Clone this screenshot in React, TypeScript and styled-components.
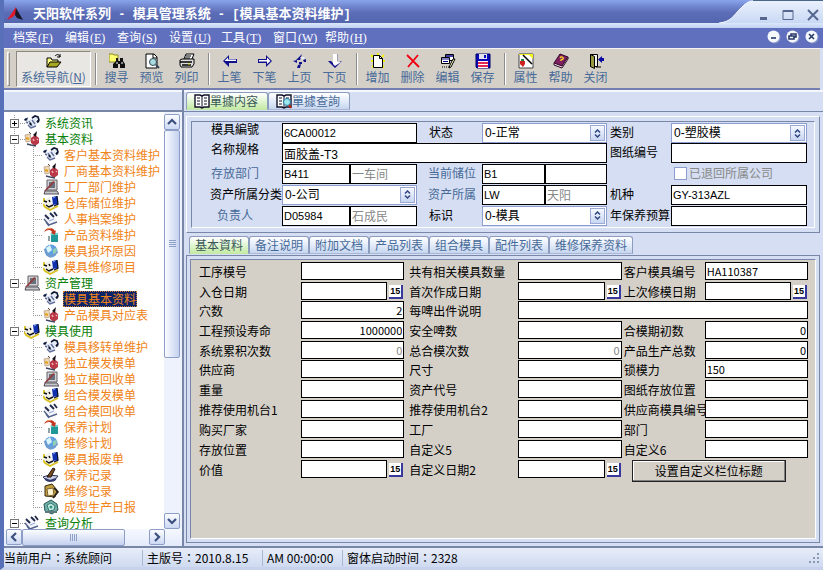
import React from 'react';
import styled, { createGlobalStyle, css } from 'styled-components';

const cjk = '"Noto Sans CJK SC", sans-serif';
const ink = '#000';
const steel = '#476a98';
const sky = '#d5def2';
const line = '#7886a8';
const stone = '#d4d0c8';

const Global = createGlobalStyle`
  * { box-sizing: border-box; }
  body { margin: 0; overflow: hidden; }
  button, input, select { font: inherit; margin: 0; padding: 0; border-radius: 0; }
`;

const Window = styled.div`
  height: 100vh;
  display: flex;
  flex-direction: column;
  font: 12px/16px ${cjk};
  color: ${ink};
  background: ${sky};
  border-left: 4px solid #5870b8;
  border-bottom: 3px solid #c6d2ec;
  overflow: hidden;
`;

/* ---------- title and menu ---------- */
const TitleBar = styled.header`
  height: 23px;
  flex: none;
  display: flex;
  margin-left: -4px;
  background: linear-gradient(#89a5ec, #7389d0 25%, #5c6db8 55%, #5366ae);
`;
const TitleText = styled.h1`
  flex: 1;
  display: flex;
  align-items: center;
  gap: 9px;
  margin: 0;
  padding: 5px 0 0 7px;
  font-size: 13px;
  line-height: 16px;
  font-weight: 700;
  color: #fff;
  white-space: pre;
`;
const TitleDash = styled.span`
  font-family: "Liberation Mono", monospace;
  font-size: 12px;
`;
const TitleButtons = styled.div`
  display: flex;
  align-items: center;
  gap: 5px;
  padding: 6px 0 0 0;
  background: linear-gradient(#eaf1fd, #c9d8f4);
  border-top: 1px solid #49688c;
`;
const TitleButton = styled.button`
  width: 20px;
  height: 16px;
  border: 0;
  background: none;
  display: grid;
  place-items: center;
`;
const Strip = styled.div`
  height: 5px;
  flex: none;
  background: linear-gradient(#dce8fb, #bfd0f2);
`;
const MenuBar = styled.nav`
  height: 20px;
  flex: none;
  display: flex;
  align-items: center;
  padding: 0 4px 2px 9px;
  background: #6070bf;
`;
const MenuItem = styled.button`
  width: 52px;
  border: 0;
  background: none;
  color: #fff;
  text-align: left;
  white-space: nowrap;
`;
const Key = styled.span`
  font-family: "Liberation Serif", serif;
  margin-left: 1px;
`;
const MdiButtons = styled.div`
  display: flex;
  gap: 5px;
  margin-left: auto;
`;
const MdiButton = styled.button`
  width: 14px;
  height: 14px;
  border: 0;
  background: none;
`;

/* ---------- toolbar ---------- */
const ToolBar = styled.div`
  height: 42px;
  flex: none;
  display: flex;
  align-items: center;
  padding-left: 3px;
  background: ${stone};
  border-top: 1px solid #f4f4f8;
  border-bottom: 2px solid #7580b0;
  margin-right: 3px;
`;
const Grip = styled.div`
  width: 3px;
  height: 34px;
  margin-right: 6px;
  border: 1px solid;
  border-color: #fff #8c8c8c #8c8c8c #fff;
`;
const NavButton = styled.button`
  width: 75px;
  height: 36px;
  border: 1px solid;
  border-color: #8b8880 #fff #fff #8b8880;
  background: #e9e7e3;
  color: ${steel};
  display: flex;
  flex-direction: column;
  align-items: center;
  justify-content: center;
  line-height: 16px;
  white-space: nowrap;
`;
const ToolButton = styled.button`
  width: 35px;
  height: 36px;
  border: 0;
  background: none;
  color: ${steel};
  display: flex;
  flex-direction: column;
  align-items: center;
  justify-content: center;
  line-height: 16px;
`;
const ToolSep = styled.div`
  width: 2px;
  height: 32px;
  margin: 0 2px 0 4px;
  border-left: 1px solid #8c8c8c;
  border-right: 1px solid #fff;
`;
const Icon = styled.svg`
  width: 16px;
  height: 16px;
  flex: none;
  display: block;
`;

/* ---------- body ---------- */
const Body = styled.div`
  flex: 1;
  min-height: 0;
  display: flex;
`;
const Side = styled.aside`
  width: 180px;
  flex: none;
  display: flex;
  flex-direction: column;
  border-right: 2px solid ${line};
`;
const SideHead = styled.div`
  height: 22px;
  flex: none;
  border-top: 2px solid #f5f8ff;
  border-bottom: 2px solid ${line};
`;
const TreeArea = styled.div`
  flex: 1;
  min-height: 0;
  display: flex;
  background: #fff;
`;
const Tree = styled.ul`
  flex: 1;
  min-width: 0;
  margin: 0;
  padding: 3px 0 0 5px;
  list-style: none;
  overflow: hidden;
`;
const dotsV = 'repeating-linear-gradient(#999 0 1px, transparent 1px 2px)';
const dotsH = 'repeating-linear-gradient(90deg, #999 0 1px, transparent 1px 2px)';
const TreeRow = styled.li<{ $child?: boolean; $last?: boolean }>`
  height: 16px;
  display: flex;
  align-items: center;
  gap: 4px;
  white-space: nowrap;
  color: ${p => (p.$child ? '#f08418' : '#088008')};
  ${p =>
    p.$child
      ? css`
          padding-left: 34px;
          background: ${dotsV} 5px 0 / 1px 100% no-repeat,
            ${dotsV} 24px 0 / 1px ${p.$last ? '50%' : '100%'} no-repeat,
            ${dotsH} 24px 8px / 10px 1px no-repeat;
        `
      : css`
          padding-left: 1px;
          background: ${dotsV} 5px 0 / 1px 100% no-repeat,
            ${dotsH} 5px 8px / 12px 1px no-repeat;
        `}
`;
const Expander = styled.button`
  width: 9px;
  height: 9px;
  border: 1px solid #777;
  background: #fff;
  display: grid;
  place-items: center;
  margin-right: 1px;
`;
const TreeLabel = styled.span<{ $on?: boolean }>`
  line-height: 16px;
  padding: 0 1px;
  ${p => p.$on && css`background: #0a246a; outline: 1px dotted #d08030; outline-offset: -1px;`}
`;
const VScroll = styled.div`
  width: 18px;
  flex: none;
  display: flex;
  flex-direction: column;
  padding: 2px 2px 0 0;
  background: #eef2fc;
`;
const HScroll = styled.div`
  height: 17px;
  flex: none;
  display: flex;
  padding: 0 17px 0 2px;
  background: linear-gradient(#f5f8ff, #e3eafa);
`;
const ScrollButton = styled.button`
  width: 16px;
  height: 16px;
  flex: none;
  border: 1px solid #8d9ec6;
  border-radius: 2px;
  background: linear-gradient(#fbfcff, #ccd9f3);
  display: grid;
  place-items: center;
`;
const VThumb = styled.div`
  flex: 0 1 55%;
  border: 1px solid #8d9ec6;
  border-radius: 2px;
  background: linear-gradient(90deg, #fafcff, #c4d1ef);
  display: grid;
  place-items: center;
`;
const HThumb = styled.div`
  flex: 0 1 65%;
  border: 1px solid #8d9ec6;
  border-radius: 2px;
  background: linear-gradient(#fafcff, #c4d1ef);
  display: grid;
  place-items: center;
`;
const Spacer = styled.div`
  flex: 1;
`;

const Main = styled.main`
  flex: 1;
  min-width: 0;
  display: flex;
  flex-direction: column;
`;
const Tabs = styled.div<{ $inner?: boolean }>`
  display: flex;
  flex: none;
  align-items: flex-end;
  ${p =>
    p.$inner
      ? css`height: 22px; padding: 0 0 1px 5px;`
      : css`height: 22px; padding: 0 0 1px 2px; border-top: 2px solid #f5f8ff; border-bottom: 1px solid ${line};`}
`;
const Tab = styled.button<{ $on?: boolean; $doc?: boolean }>`
  height: 18px;
  padding: ${p => (p.$doc ? '0 9px 0 7px' : '0 5px')};
  border: 1px solid #8c9cbc;
  border-bottom-color: ${p => (p.$on ? '#c4e8a8' : '#aab8d8')};
  border-radius: 3px 3px 0 0;
  margin-right: -1px;
  flex: none;
  display: flex;
  align-items: center;
  line-height: 16px;
  color: ${p => (p.$on ? '#385858' : steel)};
  background: ${p =>
    p.$on ? 'linear-gradient(#fff, #e9f8dd 40%, #c5eaa5)' : 'linear-gradient(#fff, #e4ecfa 50%, #c6d6ee)'};
  & + & { margin-left: 1px; }
`;

const HeadPane = styled.section`
  flex: none;
  margin: 4px 3px 0 2px;
  padding: 4px;
  border: 1px solid;
  border-color: #fff ${line} ${line} #fff;
`;
const HeadGrid = styled.form`
  display: grid;
  grid-template-columns: 89px minmax(0, 135fr) 65px minmax(0, 125fr) 64px minmax(0, 136fr);
  grid-template-rows: 20px 20px 21px 21px 21px;
  align-items: center;
  padding: 1px 7px 1px 1px;
  border: 1px solid;
  border-color: ${line} #fff #fff ${line};
  font-family: "Liberation Sans", ${cjk};
`;
const Label = styled.label<{ $blue?: boolean; $pad?: number; $top?: boolean }>`
  color: ${p => (p.$blue ? steel : ink)};
  padding-left: ${p => p.$pad ?? 0}px;
  line-height: 14px;
  white-space: nowrap;
  align-self: ${p => (p.$top ? 'start' : 'center')};
`;
const Pair = styled.div`
  display: grid;
  grid-template-columns: 68fr 67fr;
`;
const Box = styled.input<{ $tall?: boolean; $dim?: boolean; $right?: boolean; $span?: number; $small?: boolean }>`
  width: 100%;
  min-width: 0;
  height: ${p => (p.$tall ? 20 : 18)}px;
  border: 1px solid #000;
  background: #fff;
  padding: 0 1px;
  font-size: ${p => (p.$small ? 11 : 12)}px;
  line-height: 14px;
  color: ${p => (p.$dim ? '#888' : ink)};
  text-align: ${p => (p.$right ? 'right' : 'left')};
  ${p => p.$span && css`grid-column: span ${p.$span};`}
`;
const PickWrap = styled.div`
  display: grid;
  align-items: center;
  height: 20px;
  border: 1px solid #8c9ed0;
  background: #fff;
  & > * { grid-area: 1 / 1; }
`;
const PickSelect = styled.select`
  appearance: none;
  width: 100%;
  height: 18px;
  border: 0;
  padding-left: 2px;
  background: transparent;
  color: ${ink};
`;
const PickArrow = styled.span`
  justify-self: end;
  width: 15px;
  height: 16px;
  margin-right: 1px;
  border: 1px solid #9aaad4;
  background: linear-gradient(#f6f9ff, #c8d6f2);
  display: grid;
  place-items: center;
  pointer-events: none;
`;
const Check = styled.label`
  display: flex;
  align-items: center;
  gap: 2px;
  padding-left: 3px;
  color: #888;
  white-space: nowrap;
`;
const Tick = styled.input`
  appearance: none;
  width: 13px;
  height: 13px;
  border: 1px solid #8c9ed0;
  background: #fff;
`;

const DetailPane = styled.section`
  flex: 1;
  min-height: 0;
  display: flex;
  margin: 0 3px 3px 2px;
  padding: 3px;
  border: 1px solid ${line};
`;
const DetailGrid = styled.form`
  flex: 1;
  display: grid;
  grid-template-columns: 102px minmax(0, 103fr) 114px minmax(0, 103fr) 83px minmax(0, 103fr);
  grid-template-rows: 20px 19px 20px 20px 19px repeat(6, 20px);
  align-items: start;
  align-content: start;
  padding: 2px 7px 0 8px;
  border: 1px solid;
  border-color: ${line} #fff #fff ${line};
  background: ${stone};
`;
const DateField = styled.div`
  display: flex;
  align-items: center;
  gap: 2px;
`;
const DayButton = styled.button`
  width: 14px;
  height: 14px;
  flex: none;
  margin: 2px 1px 0 0;
  border: solid #38389c;
  border-width: 0 2px 2px 0;
  background: #fff;
  font: 700 9px/11px "Liberation Sans", sans-serif;
  text-align: center;
`;
const CaptionButton = styled.button`
  grid-column: span 2;
  width: 154px;
  height: 22px;
  margin-left: 10px;
  border: 1px solid;
  border-color: #fff #000 #000 #fff;
  box-shadow: inset -1px -1px #808080, inset 1px 1px #fff;
  outline: 1px solid #222;
  outline-offset: -1px;
  background: ${stone};
  line-height: 16px;
`;

const StatusBar = styled.footer`
  height: 21px;
  flex: none;
  display: flex;
  align-items: center;
  border-top: 2px solid ${line};
  background: linear-gradient(#e7edf9, #cfdaf0);
`;
const StatusCell = styled.span<{ $w?: number }>`
  ${p => (p.$w ? css`width: ${p.$w}px; border-right: 1px solid #a9b6d4;` : css`flex: 1;`)}
  padding-left: 4px;
  line-height: 16px;
  white-space: nowrap;
  &:first-child { padding-left: 0; }
`;
const Colon = styled.span`
  font-family: "Noto Sans CJK TC", sans-serif;
`;
const GripDots = styled.svg`
  width: 12px;
  height: 12px;
  margin-right: 3px;
`;

/* ---------- toolbar and tree drawings ---------- */
const art: Record<string, React.ReactNode> = {
  nav: <><path d="M1 14V5h4l1 2h6v2" fill="#ffff80" stroke="#000" /><path d="M1 14l3-5h11l-4 5z" fill="#a8a820" stroke="#000" /><path d="M9 3c2-2 4-2 5 1m0-3v3h-3" fill="none" stroke="#000" /></>,
  find: <><path d="M0 1h4l1 1h4v7H0z" fill="#ffff70" stroke="#8a8a20" /><path d="M7 5h2v3h2V5h3v3l2 3v4h-5v-4H9v4H4v-4l3-3z" fill="#111" /><path d="M8 9v2m5-2v2" stroke="#fff" /></>,
  preview: <><path d="M2 1h8l3 3v11H2z" fill="#fff" stroke="#000" /><path d="M9 1v4h4" fill="none" stroke="#000" /><circle cx="9" cy="9" r="3.5" fill="#a8dce0" stroke="#345" /><path d="M12 12l3 3" stroke="#345" strokeWidth="2" /></>,
  print: <><path d="M5 6l2-5h8l-2 5" fill="#fff" stroke="#000" /><path d="M7 3h5M6 5h5" stroke="#000" /><path d="M1 7l2-1h12v5l-2 3H2l-1-2z" fill="#ddd" stroke="#000" /><path d="M1 9h12M3 12h9" stroke="#000" strokeWidth="1.5" /><path d="M9 11h2" stroke="#dd0" /></>,
  left: <><path d="M7 2L1 8l6 6v-4h8V6H7z" fill="#10108c" /><path d="M6 4.5L2.500 8H14V6.500H6z" fill="#fff" /></>,
  right: <><path d="M9 2l6 6-6 6v-4H1V6h8z" fill="#10108c" /><path d="M10 4.500L13.500 8 10 11V8.500H2V7h8z" fill="#fff" /></>,
  pageUp: <><path d="M10 1L4 7h4zM1 8l4-1v3z" fill="#10108c" /><path d="M8 4h5l-2 3z" fill="#eceaf0" /><path d="M11 7l3-1v3h-2zM7 9h3v2H7zM6 12l3-1-1 4H5z" fill="#10108c" /></>,
  pageDown: <><path d="M1 8l7 7 7-7-3 1-4 3-4-4z" fill="#10108c" /><path d="M6 1h4v8h4l-6 4-2-2z" fill="#fff" /><path d="M10.500 1v7" stroke="#9c9cb8" /></>,
  add: <><path d="M1 2l2 2M8 0v2M14 2l-2 2M1 8h2m10 0h2M2 14l2-1m10 1l-2-1" stroke="#f4f400" strokeWidth="2" /><path d="M3.500 2.500h6l3 3v9h-9z" fill="#fff" stroke="#000" /><path d="M9.500 2.500v3h3" fill="none" stroke="#000" /></>,
  del: <path d="M2 2l12 12M13 2L3 14" stroke="#f00010" strokeWidth="1.8" />,
  edit: <><path d="M5.500 1.500h8v6h-8z" fill="#fff" stroke="#000" /><path d="M6 3h7" stroke="#008" strokeWidth="1.5" /><path d="M1.500 4.500h8v6h-8z" fill="#fff" stroke="#000" /><path d="M2 6h7M3 8.500h5" stroke="#008" /><path d="M15 6l-4 8-2 1 1-3 3-6z" fill="#ffc" stroke="#000" /><path d="M2 14h7" stroke="#000" strokeDasharray="1 1" /></>,
  save: <><path d="M1 1h14v14H2l-1-1z" fill="#0808b8" stroke="#000068" /><path d="M4 1h8v5H4z" fill="#e4e4ec" /><path d="M9 2h2v3H9z" fill="#0808b8" /><path d="M3 8h10v7H3z" fill="#fff" /><path d="M3 10h10M3 13h10" stroke="#e02850" strokeWidth="2" /></>,
  prop: <><path d="M1 1h14v14H1z" fill="#fff" stroke="#444" /><path d="M1 1h14v5l-4-4H1z" fill="#f4f420" /><path d="M5 2l9 9" stroke="#000" strokeWidth="1.5" /><path d="M2 8h5v3l-2 3-3-3z" fill="#d02020" /><path d="M3 7h3" stroke="#208040" strokeWidth="2" /></>,
  help: <><path d="M1 10L7 1l8 3-6 9z" fill="#802060" stroke="#300828" /><path d="M1 10v2l8 3 6-9V4L9 13z" fill="#f4e8f0" stroke="#300828" /><path d="M7 5c1-2 4-1 3 1L8 7v1" fill="none" stroke="#ffe020" strokeWidth="1.3" /></>,
  close: <><path d="M2.500 1.500h7v12h-7z" fill="#f4f4f0" stroke="#000" /><path d="M2.500 1.500l4 2v12l-4-2z" fill="#98983c" stroke="#000" /><path d="M8 14h5" stroke="#000" /><path d="M16 5h-2V3l-4 3.500L14 10V8h2z" fill="#0808a0" /></>,
  book: <><path d="M1 2h5l2 1 2-1h5v12h-5l-2 1-2-1H1z" fill="#fff" stroke="#101028" strokeWidth="1.4" /><path d="M8 3v12M3 5h3M3 8h3M3 11h3M10 5h3M10 8h3M10 11h3" stroke="#101028" /></>,
  bookFind: <><path d="M1 2h5l2 1 2-1h5v12h-5l-2 1-2-1H1z" fill="#fff" stroke="#101028" strokeWidth="1.4" /><path d="M8 3v12M3 5h3M3 8h3M3 11h3M10 5h3" stroke="#101028" /><circle cx="11" cy="9" r="3.5" fill="#9ce8f0" stroke="#2878a0" /><path d="M13 12l2 3" stroke="#c02010" strokeWidth="2" /></>,
  pens: <><path d="M1 4l4 1 4-3 5 1 1 3-4 6-5 2z" fill="#e6ebf8" /><path d="M0 5l4-2M2 7l2 1M4 10l3 3 5-2M5 6l3 5M8 5l3 4" fill="none" stroke="#607098" strokeWidth="1.4" /><path d="M8 3l3-2 3 1 1 3-2 2" fill="none" stroke="#101830" strokeWidth="1.6" /><path d="M1 5l2-1M6 8l1 2M13 7l2-1" stroke="#101830" strokeWidth="2" /></>,
  berry: <><path d="M1 4l5-1 1 7-5 1z" fill="#f0d8b0" stroke="#b09080" strokeWidth=".7" /><path d="M2 7l3 1" stroke="#e0a020" strokeWidth="2" /><path d="M7 7l4-3 4 3v5l-4 3-4-3z" fill="#b83848" /><path d="M9 4l4-4-1 6z" fill="#181018" /><path d="M9 8l1 2M13 8l1 1" stroke="#f8b0b0" strokeWidth="1.5" /><path d="M3 13l4 1 5 1" stroke="#404860" strokeWidth="1.6" /><path d="M5 1l2 2" stroke="#504840" /></>,
  pc: <><path d="M4 1h10v10H4z" fill="#d4d4d4" stroke="#606068" /><path d="M6 3h6v6H6z" fill="#687080" /><path d="M2 12h12l2 3H1z" fill="#c8c8cc" stroke="#505058" /><path d="M1 12L10 2l2 1-9 9z" fill="#904040" /></>,
  mascot: <><path d="M1 5l6-3 2 7 5 1-7 5-6-4z" fill="#f0f0e8" /><path d="M0 9l2 3 5 3 8-4M1 3v4" fill="none" stroke="#d8c020" strokeWidth="1.8" /><path d="M1 6l3 1m2-2l1 2M3 10l3 2 4-2" fill="none" stroke="#101018" strokeWidth="1.4" /><path d="M9 2l5-1 1 8-5 1z" fill="#1030b0" /><path d="M14 1l1 8-4 2" fill="none" stroke="#081030" strokeWidth="1.3" /><path d="M10 3l2-1" stroke="#78a0f0" /></>,
  papers: <><path d="M1 6l9-4 4 8-8 5z" fill="#f4f6fc" /><path d="M2 4l4 4m1-6l4 4m0-5l3 4" stroke="#202848" strokeWidth="1.8" /><path d="M1 8l5 6 8-3M3 11l3 4" fill="none" stroke="#506088" strokeWidth="1.4" /><path d="M6 10l5-2" stroke="#90a8d8" /></>,
  move: <><path d="M8 8h7v7H8z" fill="#209898" /><path d="M7 7l2-1h6v2H8z" fill="#68d8d8" /><path d="M1 5c2-5 9-5 11-1l1-1-1 5-4-2 1-1C7 2 4 3 1 5z" fill="#c03820" /><path d="M4 2l4-1" stroke="#f0a060" /><path d="M6 9v5" stroke="#204850" /></>,
  globe: <><circle cx="8" cy="8" r="6.500" fill="#60a0e0" /><path d="M3 5l4-3 2 5-4 3z" fill="#d8f4f8" /><path d="M10 6l4-1-1 5-3 1z" fill="#90d0b8" /><path d="M1 6l6 8 8-5" fill="none" stroke="#8098c0" strokeWidth="1.2" /></>,
  quill: <><path d="M0 10l6-2 9 1-4 5H4z" fill="#c8cce0" stroke="#303858" /><path d="M4 10L10 1l2 1-4 8z" fill="#805020" stroke="#181010" /><path d="M2 12l5 2 6-2" stroke="#303870" strokeWidth="2" fill="none" /></>,
  folder: <><path d="M2 3l7-2 5 6-2 7-10-1z" fill="#c0a040" stroke="#382810" /><path d="M4 6l6-1 1 7-6 1z" fill="#fff4d0" stroke="#786030" /><path d="M11 5l4 4-5 6" fill="none" stroke="#282018" strokeWidth="1.6" /></>,
  report: <><path d="M1 5l7-4 6 4 1 6-6 4-7-3z" fill="#70b0a8" stroke="#285858" /><path d="M4 6l4-2 4 3-1 4-5 1z" fill="#c0ece0" stroke="#387870" /><circle cx="8" cy="8" r="1.5" fill="#389088" /><path d="M2 13h12" stroke="#607880" strokeWidth="2" /></>,
};
const Glyph = ({ name }: { name: string }) => (
  <Icon viewBox="0 0 16 16" aria-hidden="true">{art[name]}</Icon>
);

const Chevron = ({ d }: { d: string }) => (
  <svg width="10" height="10" viewBox="0 0 10 10" aria-hidden="true">
    <path d={d} fill="none" stroke="#3c5080" strokeWidth="2.2" />
  </svg>
);

/* ---------- data ---------- */
const menus = [['档案', 'F'], ['编辑', 'E'], ['查询', 'S'], ['设置', 'U'], ['工具', 'T'], ['窗口', 'W'], ['帮助', 'H']];
const tools: [string, string][][] = [
  [['find', '搜寻'], ['preview', '预览'], ['print', '列印']],
  [['left', '上笔'], ['right', '下笔'], ['pageUp', '上页'], ['pageDown', '下页']],
  [['add', '增加'], ['del', '删除'], ['edit', '编辑'], ['save', '保存']],
  [['prop', '属性'], ['help', '帮助'], ['close', '关闭']],
];
type Node = { icon: string; text: string; closed?: boolean; kids: [string, string][] };
const tree: Node[] = [
  { icon: 'pens', text: '系统资讯', closed: true, kids: [] },
  {
    icon: 'berry', text: '基本资料',
    kids: [['pens', '客户基本资料维护'], ['berry', '厂商基本资料维护'], ['pc', '工厂部门维护'], ['mascot', '仓库储位维护'],
      ['papers', '人事档案维护'], ['move', '产品资料维护'], ['globe', '模具损坏原因'], ['mascot', '模具维修项目']],
  },
  { icon: 'pc', text: '资产管理', kids: [['pens', '模具基本资料'], ['berry', '产品模具对应表']] },
  {
    icon: 'mascot', text: '模具使用',
    kids: [['pens', '模具移转单维护'], ['berry', '独立模发模单'], ['pc', '独立模回收单'], ['mascot', '组合模发模单'],
      ['papers', '组合模回收单'], ['move', '保养计划'], ['globe', '维修计划'], ['mascot', '模具报废单'],
      ['quill', '保养记录'], ['folder', '维修记录'], ['report', '成型生产日报']],
  },
  { icon: 'papers', text: '查询分析', kids: [] },
];
const selected = '模具基本资料';

type Field = { label: string; kind?: 'date' | 'wide' | 'button'; value?: string; right?: boolean; dim?: boolean };
const fields: Field[] = [
  { label: '工序模号' }, { label: '共有相关模具数量' }, { label: '客户模具编号', value: 'HA110387' },
  { label: '入仓日期', kind: 'date' }, { label: '首次作成日期', kind: 'date' }, { label: '上次修模日期', kind: 'date' },
  { label: '穴数', value: '2', right: true }, { label: '每啤出件说明', kind: 'wide' },
  { label: '工程预设寿命', value: '1000000', right: true }, { label: '安全啤数' }, { label: '合模期初数', value: '0', right: true },
  { label: '系统累积次数', value: '0', right: true, dim: true }, { label: '总合模次数', value: '0', right: true, dim: true }, { label: '产品生产总数', value: '0', right: true },
  { label: '供应商' }, { label: '尺寸' }, { label: '锁模力', value: '150' },
  { label: '重量' }, { label: '资产代号' }, { label: '图纸存放位置' },
  { label: '推荐使用机台1' }, { label: '推荐使用机台2' }, { label: '供应商模具编号' },
  { label: '购买厂家' }, { label: '工厂' }, { label: '部门' },
  { label: '存放位置' }, { label: '自定义5' }, { label: '自定义6' },
  { label: '价值', kind: 'date' }, { label: '自定义日期2', kind: 'date' }, { label: '设置自定义栏位标题', kind: 'button' },
];
const padFor = (i: number) => {
  const col = (i < 8 ? i : i + 1) % 3;
  return col === 0 ? 0 : col === 1 ? 5 : 2;
};

const Pick = ({ id, value }: { id: string; value: string }) => (
  <PickWrap>
    <PickSelect id={id} defaultValue={value}><option>{value}</option></PickSelect>
    <PickArrow>
      <svg width="7" height="9" viewBox="0 0 7 9" aria-hidden="true">
        <path d="M1 3.5L3.5 1 6 3.5M1 5.5L3.5 8 6 5.5" fill="none" stroke="#304880" strokeWidth="1.5" />
      </svg>
    </PickArrow>
  </PickWrap>
);
const Two = ({ id, a, b, name }: { id: string; a: string; b: string; name: string }) => (
  <Pair>
    <Box $tall $small id={id} defaultValue={a} />
    <Box $tall $dim aria-label={name} defaultValue={b} />
  </Pair>
);

const DetailField = ({ f, i }: { f: Field; i: number }) => {
  if (f.kind === 'button') return <CaptionButton type="button">{f.label}</CaptionButton>;
  const id = `detail-${i}`;
  return (
    <>
      <Label htmlFor={id} $pad={padFor(i)}>{f.label}</Label>
      {f.kind === 'date' ? (
        <DateField>
          <Box id={id} />
          <DayButton type="button" aria-label={`${f.label} 15`}>15</DayButton>
        </DateField>
      ) : (
        <Box id={id} $small $dim={f.dim} $right={f.right} $span={f.kind === 'wide' ? 3 : undefined} defaultValue={f.value} />
      )}
    </>
  );
};

const MdiIcon = ({ d }: { d: string }) => (
  <svg width="14" height="14" viewBox="0 0 14 14" aria-hidden="true">
    <circle cx="7.5" cy="7.5" r="6" fill="#8c98c8" />
    <circle cx="6.5" cy="6.5" r="6" fill="#f4f7fc" />
    <path d={d} fill="none" stroke="#283868" strokeWidth="1.6" />
  </svg>
);

export default function App() {
  return (
    <Window>
      <Global />
      <TitleBar>
        <TitleText>
          <svg width="17" height="14" viewBox="0 0 17 14" aria-hidden="true">
            <path d="M0 13L9 0l1 5-4 5z" fill="#e01828" />
            <path d="M9 1l7 12-6-2-2-3z" fill="#181828" />
          </svg>
          <span>天阳软件系列<TitleDash> - </TitleDash>模具管理系统<TitleDash> - [</TitleDash>模具基本资料维护<TitleDash>]</TitleDash></span>
        </TitleText>
        <svg width="34" height="23" viewBox="0 0 34 23" aria-hidden="true">
          <defs>
            <linearGradient id="sweep" x1="0" y1="0" x2="0" y2="1">
              <stop offset="0" stopColor="#eaf1fd" /><stop offset="1" stopColor="#c9d8f4" />
            </linearGradient>
          </defs>
          <path d="M0 23C12 22 15 15 21 9C26 4 29 1 34 1V23Z" fill="url(#sweep)" />
          <path d="M0 23C12 22 15 15 21 9C26 4 29 1 34 1" fill="none" stroke="#f8fbff" />
        </svg>
        <TitleButtons>
          <TitleButton aria-label="最小化"><svg width="12" height="12"><path d="M3 9.5h7" stroke="#56668e" strokeWidth="3" /></svg></TitleButton>
          <TitleButton aria-label="最大化"><svg width="12" height="12"><path d="M1 1.5h10v9H1z" fill="none" stroke="#56668e" /><path d="M1 2h10" stroke="#56668e" strokeWidth="2" /></svg></TitleButton>
          <TitleButton aria-label="关闭窗口"><svg width="12" height="12"><path d="M1 1l10 10M11 1L1 11" stroke="#56668e" strokeWidth="2" /></svg></TitleButton>
        </TitleButtons>
      </TitleBar>
      <Strip />
      <MenuBar>
        {menus.map(([t, k]) => <MenuItem key={k}>{t}<Key>(<u>{k}</u>)</Key></MenuItem>)}
        <MdiButtons>
          <MdiButton aria-label="最小化文档"><MdiIcon d="M4 8h5" /></MdiButton>
          <MdiButton aria-label="还原文档"><MdiIcon d="M5 6V4h5v3H8M3 6h5v3H3z" /></MdiButton>
          <MdiButton aria-label="关闭文档"><MdiIcon d="M4 4l5 5M9 4L4 9" /></MdiButton>
        </MdiButtons>
      </MenuBar>
      <ToolBar>
        <Grip />
        <NavButton><Glyph name="nav" /><span>系统导航(<u>N</u>)</span></NavButton>
        {tools.map((group, g) => (
          <React.Fragment key={g}>
            <ToolSep />
            {group.map(([icon, text]) => (
              <ToolButton key={text}><Glyph name={icon} />{text}</ToolButton>
            ))}
          </React.Fragment>
        ))}
      </ToolBar>
      <Body>
        <Side>
          <SideHead />
          <TreeArea>
            <Tree>
              {tree.map(n => (
                <React.Fragment key={n.text}>
                  <TreeRow>
                    <Expander aria-label={n.text}>
                      <svg width="7" height="7" aria-hidden="true">
                        <path d={n.closed ? 'M1 3.5h5M3.5 1v5' : 'M1 3.5h5'} stroke="#000" />
                      </svg>
                    </Expander>
                    <Glyph name={n.icon} />
                    <TreeLabel>{n.text}</TreeLabel>
                  </TreeRow>
                  {n.kids.map(([icon, text], i) => (
                    <TreeRow key={text} $child $last={i === n.kids.length - 1}>
                      <Glyph name={icon} />
                      <TreeLabel $on={text === selected}>{text}</TreeLabel>
                    </TreeRow>
                  ))}
                </React.Fragment>
              ))}
            </Tree>
            <VScroll>
              <ScrollButton aria-label="向上"><Chevron d="M1 7l4-4 4 4" /></ScrollButton>
              <VThumb><svg width="7" height="8" aria-hidden="true"><path d="M0 .5h7M0 2.5h7M0 4.5h7M0 6.5h7" stroke="#8fa0c8" /></svg></VThumb>
              <Spacer />
              <ScrollButton aria-label="向下"><Chevron d="M1 3l4 4 4-4" /></ScrollButton>
            </VScroll>
          </TreeArea>
          <HScroll>
            <ScrollButton aria-label="向左"><Chevron d="M7 1L3 5l4 4" /></ScrollButton>
            <HThumb><svg width="8" height="7" aria-hidden="true"><path d="M.5 0v7M2.5 0v7M4.5 0v7M6.5 0v7" stroke="#8fa0c8" /></svg></HThumb>
            <Spacer />
            <ScrollButton aria-label="向右"><Chevron d="M3 1l4 4-4 4" /></ScrollButton>
          </HScroll>
        </Side>
        <Main>
          <Tabs>
            <Tab $on $doc><Glyph name="book" />單據内容</Tab>
            <Tab $doc><Glyph name="bookFind" />單據查詢</Tab>
          </Tabs>
          <HeadPane>
            <HeadGrid>
              <Label htmlFor="no" $pad={18} $top>模具編號</Label>
              <Box $tall $small id="no" defaultValue="6CA00012" />
              <Label htmlFor="state" $pad={12}>状态</Label>
              <Pick id="state" value="0-正常" />
              <Label htmlFor="kind" $pad={3}>类别</Label>
              <Pick id="kind" value="0-塑胶模" />

              <Label htmlFor="spec" $pad={18} $top>名称规格</Label>
              <Box $tall $span={3} id="spec" defaultValue="面胶盖-T3" />
              <Label htmlFor="drawing" $pad={3}>图纸编号</Label>
              <Box $tall id="drawing" />

              <Label htmlFor="dept" $pad={18} $blue>存放部门</Label>
              <Two id="dept" a="B411" b="一车间" name="部门名称" />
              <Label htmlFor="slot" $pad={11} $blue>当前储位</Label>
              <Two id="slot" a="B1" b="" name="储位名称" />
              <span />
              <Check><Tick type="checkbox" />已退回所属公司</Check>

              <Label htmlFor="class" $pad={17}>资产所属分类</Label>
              <Pick id="class" value="0-公司" />
              <Label htmlFor="owner" $pad={11} $blue>资产所属</Label>
              <Two id="owner" a="LW" b="天阳" name="所属名称" />
              <Label htmlFor="machine" $pad={3}>机种</Label>
              <Box $tall $small id="machine" defaultValue="GY-313AZL" />

              <Label htmlFor="person" $pad={24} $blue>负责人</Label>
              <Two id="person" a="D05984" b="石成民" name="负责人姓名" />
              <Label htmlFor="mark" $pad={12}>标识</Label>
              <Pick id="mark" value="0-模具" />
              <Label htmlFor="budget" $pad={3}>年保养预算</Label>
              <Box $tall id="budget" />
            </HeadGrid>
          </HeadPane>
          <Tabs $inner>
            {['基本資料', '备注说明', '附加文档', '产品列表', '组合模具', '配件列表', '维修保养资料'].map((t, i) => (
              <Tab key={t} $on={i === 0}>{t}</Tab>
            ))}
          </Tabs>
          <DetailPane>
            <DetailGrid>
              {fields.map((f, i) => <DetailField key={f.label} f={f} i={i} />)}
            </DetailGrid>
          </DetailPane>
        </Main>
      </Body>
      <StatusBar>
        <StatusCell $w={139}>当前用户<Colon lang="zh-Hant">：</Colon>系统顾问</StatusCell>
        <StatusCell $w={120}>主版号<Colon lang="zh-Hant">：</Colon>2010.8.15</StatusCell>
        <StatusCell $w={80}>AM 00:00:00</StatusCell>
        <StatusCell>窗体启动时间<Colon lang="zh-Hant">：</Colon>2328</StatusCell>
        <GripDots viewBox="0 0 12 12" aria-hidden="true">
          <path d="M9 1h2v2H9zM5 5h2v2H5zM9 5h2v2H9zM1 9h2v2H1zM5 9h2v2H5zM9 9h2v2H9z" fill="#8c98b4" />
        </GripDots>
      </StatusBar>
    </Window>
  );
}
